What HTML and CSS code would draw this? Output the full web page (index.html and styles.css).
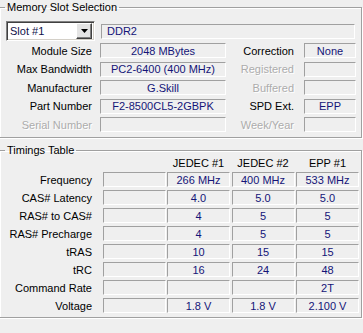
FILE: index.html
```html
<!DOCTYPE html>
<html lang="en">
<head>
    <meta charset="UTF-8">
    <title>Memory SPD</title>
    <link rel="stylesheet" href="styles.css">
</head>
<body>
    <fieldset class="group slot">
        <legend>Memory Slot Selection</legend>
        <div class="slot-row">
            <div class="combo">
                <span class="combo-text">Slot #1</span>
                <span class="drop"><svg width="7" height="4" viewBox="0 0 7 4"><path d="M0 0h7L3.5 4z" fill="#000"/></svg></span>
            </div>
            <div class="box type">DDR2</div>
        </div>
        <div class="spd">
            <span class="lbl">Module Size</span><span class="box">2048 MBytes</span>
            <span class="lbl">Correction</span><span class="box">None</span>

            <span class="lbl">Max Bandwidth</span><span class="box">PC2-6400 (400 MHz)</span>
            <span class="lbl off">Registered</span><span class="box"></span>

            <span class="lbl">Manufacturer</span><span class="box">G.Skill</span>
            <span class="lbl off">Buffered</span><span class="box"></span>

            <span class="lbl">Part Number</span><span class="box">F2-8500CL5-2GBPK</span>
            <span class="lbl">SPD Ext.</span><span class="box">EPP</span>

            <span class="lbl off">Serial Number</span><span class="box"></span>
            <span class="lbl off">Week/Year</span><span class="box"></span>
        </div>
    </fieldset>

    <fieldset class="group timings">
        <legend>Timings Table</legend>
        <div class="ttable">
            <span></span><span></span>
            <span class="head">JEDEC #1</span><span class="head">JEDEC #2</span><span class="head">EPP #1</span>

            <span class="lbl">Frequency</span><span class="box"></span>
            <span class="box">266 MHz</span><span class="box">400 MHz</span><span class="box">533 MHz</span>

            <span class="lbl">CAS# Latency</span><span class="box"></span>
            <span class="box">4.0</span><span class="box">5.0</span><span class="box">5.0</span>

            <span class="lbl">RAS# to CAS#</span><span class="box"></span>
            <span class="box">4</span><span class="box">5</span><span class="box">5</span>

            <span class="lbl">RAS# Precharge</span><span class="box"></span>
            <span class="box">4</span><span class="box">5</span><span class="box">5</span>

            <span class="lbl">tRAS</span><span class="box"></span>
            <span class="box">10</span><span class="box">15</span><span class="box">15</span>

            <span class="lbl">tRC</span><span class="box"></span>
            <span class="box">16</span><span class="box">24</span><span class="box">48</span>

            <span class="lbl">Command Rate</span><span class="box"></span>
            <span class="box"></span><span class="box"></span><span class="box">2T</span>

            <span class="lbl">Voltage</span><span class="box"></span>
            <span class="box">1.8 V</span><span class="box">1.8 V</span><span class="box">2.100 V</span>
        </div>
    </fieldset>
</body>
</html>
```

FILE: styles.css
```css
* {
    box-sizing: border-box;
}
body {
    margin: 0;
    width: 363px;
    height: 333px;
    overflow: hidden;
    background-color: #efefef;
    font: 11px "Liberation Sans", Arial, sans-serif;
    color: #000;
}
.group {
    margin: 0 1px 0 -1px;
    padding: 0;
    min-width: 0;
    border: 1px solid #a0a0a0;
    box-shadow: inset 1px 1px 0 #fff, 1px 1px 0 #fff;
}
.group legend {
    margin-left: 5px;
    padding: 0 2px;
    line-height: 14px;
}
.timings {
    margin-top: 5px;
}

/* sunken read-only field */
.box {
    display: flex;
    align-items: center;
    justify-content: center;
    height: 15px;
    border: 1px solid #a0a0a0;
    border-right-color: #fff;
    border-bottom-color: #fff;
    color: #141478;
    white-space: nowrap;
    overflow: hidden;
}
.lbl {
    display: flex;
    align-items: center;
    justify-content: flex-end;
    white-space: nowrap;
}
.lbl.off {
    color: #acacac;
    text-shadow: 1px 1px 0 #fff;
}

.slot-row {
    display: flex;
    align-items: center;
    margin-top: 7px;
}
.combo {
    display: flex;
    align-items: center;
    justify-content: space-between;
    width: 89px;
    height: 20px;
    margin-left: 6px;
    padding: 0 2px 0 3px;
    background-color: #fff;
    border: 1px solid #808080;
    border-right-color: #fff;
    border-bottom-color: #fff;
    box-shadow: inset 1px 1px 0 #404040, inset -1px -1px 0 #d4d0c8;
    color: #10104a;
}
.drop {
    display: flex;
    align-items: center;
    justify-content: center;
    width: 16px;
    height: 16px;
    background-color: #e4e4e4;
    border: 1px solid #fff;
    border-right-color: #404040;
    border-bottom-color: #404040;
    box-shadow: inset -1px -1px 0 #808080;
}
.box.type {
    flex: 1;
    margin: 0 6px 0 6px;
    justify-content: flex-start;
    padding-left: 5px;
}

.spd {
    display: grid;
    grid-template-columns: 100px 126px 78px 52px;
    grid-auto-rows: 15px;
    row-gap: 3.5px;
    margin: 2px 0 5px;
}
.spd .lbl:nth-child(4n+1) {
    padding-right: 8px;
}
.spd .lbl:nth-child(4n+3) {
    padding-right: 10px;
}

.ttable {
    display: grid;
    grid-template-columns: 101px repeat(4, 63px);
    grid-template-rows: 12px;
    grid-auto-rows: 15px;
    column-gap: 1.5px;
    row-gap: 3px;
    margin-bottom: 4px;
}
.ttable .lbl {
    padding-right: 9px;
}
.head {
    display: flex;
    align-items: center;
    justify-content: center;
}
```
